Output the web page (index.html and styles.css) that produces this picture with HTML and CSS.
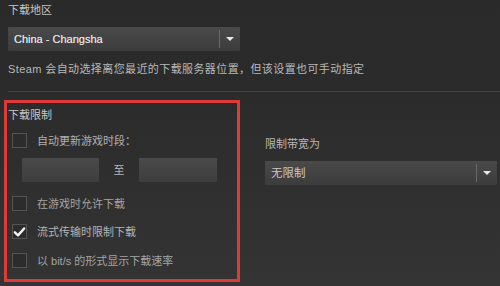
FILE: index.html
```html
<!DOCTYPE html>
<html>
<head>
<meta charset="utf-8">
<link rel="stylesheet" href="styles.css">
</head>
<body>
<div class="page">
  <div class="region">
    <div class="heading">下载地区</div>
    <div class="select region-select">
      <span class="select-text">China - Changsha</span>
      <span class="select-sep"></span>
      <span class="select-arrow"></span>
    </div>
    <div class="desc">Steam 会自动选择离您最近的下载服务器位置，但该设置也可手动指定</div>
  </div>
  <div class="separator"></div>
  <div class="lower">
    <div class="limits">
      <div class="heading limits-title">下载限制</div>
      <div class="check-row row-first">
        <span class="checkbox"></span>
        <span class="label">自动更新游戏时段：</span>
      </div>
      <div class="time-row">
        <span class="time-input first"></span>
        <span class="to">至</span>
        <span class="time-input second"></span>
      </div>
      <div class="check-row row-2">
        <span class="checkbox"></span>
        <span class="label">在游戏时允许下载</span>
      </div>
      <div class="check-row row-3">
        <span class="checkbox checked">
          <svg width="14" height="14" viewBox="0 0 14 14"><path d="M2 7.4 L5.4 10.6 L12 3.2" fill="none" stroke="#f4f4f4" stroke-width="2.6" stroke-linecap="round" stroke-linejoin="round"/></svg>
        </span>
        <span class="label bright">流式传输时限制下载</span>
      </div>
      <div class="check-row row-4">
        <span class="checkbox"></span>
        <span class="label">以 bit/s 的形式显示下载速率</span>
      </div>
    </div>
    <div class="bandwidth">
      <div class="heading bw-title">限制带宽为</div>
      <div class="select bw-select">
        <span class="select-text">无限制</span>
        <span class="select-sep"></span>
        <span class="select-arrow"></span>
      </div>
    </div>
  </div>
</div>
</body>
</html>
```
FILE: styles.css
```css
* { box-sizing: border-box; }
html, body {
  margin: 0;
  padding: 0;
  width: 500px;
  height: 286px;
  overflow: hidden;
}
body {
  background: linear-gradient(to bottom, #2a2a2a 0px, #2b2b2b 90px, #2f2f2f 180px, #343434 286px);
  font-family: "Liberation Sans", Arial, "Noto Sans CJK SC", sans-serif;
  font-size: 11px;
  color: #c4c4c4;
}
.page {
  padding-left: 8px;
}
.region {
  padding-top: 4px;
}
.heading {
  line-height: 12px;
  height: 12px;
  color: #c6c6c6;
}
.select {
  display: flex;
  align-items: center;
  height: 24px;
  background: linear-gradient(to bottom, #4a4a4a, #3c3c3c);
  border-radius: 1px;
  position: relative;
}
.region-select {
  margin-top: 11px;
  width: 232px;
}
.select-text {
  flex: 1;
  padding-left: 6px;
  color: #d2d2d2;
  font-size: 11.5px;
  line-height: 14px;
}
.region-select .select-text {
  font-size: 11px;
  font-weight: normal;
  color: #dcdcdc;
  text-shadow: 0 0 0.4px #dcdcdc;
}
.select-sep {
  width: 1px;
  height: 18px;
  background: #6a6a6a;
}
.select-arrow {
  width: 20px;
  height: 24px;
  display: flex;
  align-items: center;
  justify-content: center;
}
.select-arrow::after {
  content: "";
  width: 0;
  height: 0;
  border-left: 4px solid transparent;
  border-right: 4px solid transparent;
  border-top: 4px solid #e8e8e8;
}
.desc {
  margin-top: 12px;
  line-height: 12px;
  color: #b8b8b8;
  letter-spacing: 0.4px;
}
.separator {
  margin-top: 16px;
  height: 1px;
  background: #404040;
}
.lower {
  display: flex;
  margin-top: 8px;
  margin-left: -4px;
}
.limits {
  width: 236px;
  height: 182px;
  border: 3px solid #df3a3a;
  padding-top: 6px;
  padding-left: 1px;
}
.limits-title {
  color: #c8c8c8;
}
.check-row {
  display: flex;
  align-items: center;
  height: 15px;
  padding-left: 4px;
}
.row-first { margin-top: 12px; }
.row-2 { margin-top: 14px; }
.row-3 { margin-top: 13px; }
.row-4 { margin-top: 14px; }
.checkbox {
  width: 15px;
  height: 15px;
  border: 1px solid #545454;
  background: #2c2c2c;
  display: flex;
  align-items: center;
  justify-content: center;
  flex: none;
}
.checkbox svg { display: block; }
.label {
  margin-left: 10px;
  line-height: 12px;
  color: #a4a4a4;
}
.label.bright {
  color: #b4b4b4;
}
.row-first .label { color: #b0b0b0; }
.time-row {
  display: flex;
  align-items: center;
  margin-top: 10px;
  padding-left: 14px;
  height: 24px;
}
.time-input {
  height: 24px;
  background: linear-gradient(to bottom, #4a4a4a, #3e3e3e);
  border-radius: 1px;
}
.time-input.first { width: 77px; }
.time-input.second { width: 78px; }
.to {
  width: 40px;
  text-align: center;
  color: #b4b4b4;
  line-height: 12px;
}
.bandwidth {
  flex: 1;
  padding-left: 25px;
  padding-top: 38px;
  padding-right: 3px;
}
.bw-title {
  color: #b8b8b8;
}
.bw-select {
  margin-top: 11px;
}
.bw-select .select-text {
  color: #c8c8c8;
}
```
